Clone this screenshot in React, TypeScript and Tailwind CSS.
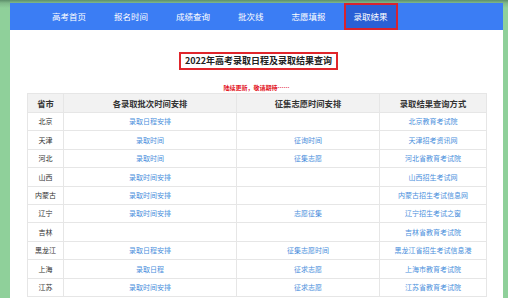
import * as React from "react";

const navItems = ["高考首页", "报名时间", "成绩查询", "批次线", "志愿填报", "录取结果"];

const rows: [string, string, string, string][] = [
  ["北京", "录取日程安排", "", "北京教育考试院"],
  ["天津", "录取时间", "征询时间", "天津招考资讯网"],
  ["河北", "录取时间", "征集志愿", "河北省教育考试院"],
  ["山西", "录取时间安排", "", "山西招生考试网"],
  ["内蒙古", "录取时间安排", "", "内蒙古招生考试信息网"],
  ["辽宁", "录取时间安排", "志愿征集", "辽宁招生考试之窗"],
  ["吉林", "", "", "吉林省教育考试院"],
  ["黑龙江", "录取日程安排", "征集志愿时间", "黑龙江省招生考试信息港"],
  ["上海", "录取日程", "征求志愿", "上海市教育考试院"],
  ["江苏", "录取时间安排", "征求志愿", "江苏省教育考试院"],
];

export default function App() {
  return (
    <div
      className="w-[508px] h-[298px] overflow-hidden bg-[#8fd09a] pt-[3px] pl-[10px]"
      style={{
        fontFamily: '"Noto Sans CJK SC", "Noto Sans", sans-serif',
        backgroundImage:
          "linear-gradient(180deg, #5d8f6a 0px, #7fb88a 3px, #8fd09a 8px), linear-gradient(120deg, rgba(60,110,70,0.35) 0%, rgba(143,208,154,0) 30%)",
      }}
    >
      <div className="w-[493px] h-[300px] bg-white">
        {/* Nav */}
        <nav className="flex h-[27px] items-stretch gap-[8px] bg-[#3b7df4] pl-[32px]">
          {navItems.map((item, i) => {
            const active = i === navItems.length - 1;
            return (
              <div
                key={item}
                className={
                  active
                    ? "flex items-center px-[8px] bg-[#2a60d6] border-2 border-[#d8232f] text-[8.5px] text-white"
                    : "flex items-center px-[10px] text-[8.5px] text-white"
                }
              >
                {item}
              </div>
            );
          })}
        </nav>

        {/* Title */}
        <div className="flex flex-col items-center pt-[22px]">
          <div className="border-2 border-[#e0262c] h-[18px] px-[4px] flex items-center text-[9px] font-bold text-[#222] ml-[4px]">
            2022年高考录取日程及录取结果查询
          </div>
          <div className="mt-[14px] text-[6px] leading-[7px] text-[#e3141e] font-bold">陆续更新，敬请期待……</div>
        </div>

        {/* Table */}
        <table className="ml-[17px] mt-[2px] w-[459px] table-fixed border-collapse text-center">
          <colgroup>
            <col className="w-[36px]" />
            <col className="w-[173px]" />
            <col className="w-[143px]" />
            <col className="w-[107px]" />
          </colgroup>
          <thead>
            <tr className="h-[19px] bg-[#f2f2f2]">
              {["省市", "各录取批次时间安排", "征集志愿时间安排", "录取结果查询方式"].map((h) => (
                <th key={h} className="border border-[#e6e6e6] p-0 text-[8.3px] font-bold text-[#333]">
                  {h}
                </th>
              ))}
            </tr>
          </thead>
          <tbody>
            {rows.map((r) => (
              <tr key={r[0]} className="h-[18.4px]">
                <td className="border border-[#e6e6e6] p-0 text-[7px] text-[#333]">{r[0]}</td>
                <td className="border border-[#e6e6e6] p-0 text-[7px] text-[#4a8fdc]">{r[1]}</td>
                <td className="border border-[#e6e6e6] p-0 text-[7px] text-[#4a8fdc]">{r[2]}</td>
                <td className="border border-[#e6e6e6] p-0 text-[7px] text-[#4a8fdc]">{r[3]}</td>
              </tr>
            ))}
          </tbody>
        </table>
      </div>
    </div>
  );
}
